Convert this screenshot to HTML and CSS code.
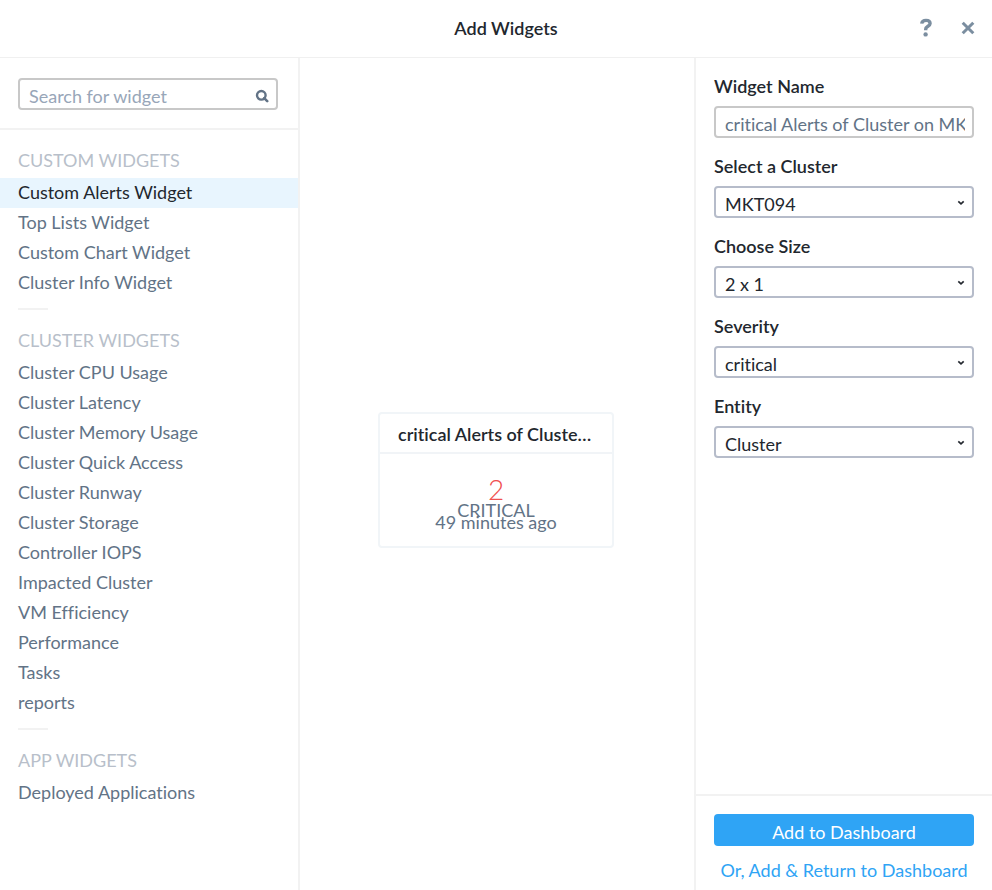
FILE: index.html
```html
<!DOCTYPE html>
<html lang="en">
<head>
<meta charset="utf-8">
<meta name="viewport" content="width=device-width, initial-scale=1">
<title>Add Widgets</title>
<link rel="stylesheet" href="styles.css">
</head>
<body>
<div class="dialog">
  <header class="dialog-header">
    <h1>Add Widgets</h1>
    <div class="header-actions">
      <button class="icon-button" type="button" aria-label="Help">
        <svg width="12" height="20" viewBox="0 0 12 20" fill="none" stroke="currentColor" stroke-width="3.4"><path d="M1.700 5.600C2 3.200 3.800 2.400 6 2.400c2.400 0 4.100 1.100 4.100 3.100 0 2.900-4.400 2.600-4.400 5.700v1"/><circle cx="5.600" cy="16.400" r="2.200" fill="currentColor" stroke="none"/></svg>
      </button>
      <button class="icon-button" type="button" aria-label="Close">
        <svg width="14" height="14" viewBox="0 0 14 14" fill="none" stroke="currentColor" stroke-width="3"><path d="M1.700 1.700l10.600 10.600M12.300 1.700L1.700 12.300"/></svg>
      </button>
    </div>
  </header>
  <div class="dialog-body">
    <nav class="sidebar" aria-label="Widgets">
      <div class="search">
        <div class="control">
          <input class="box" type="text" placeholder="Search for widget" aria-label="Search for widget">
          <svg class="search-icon" width="14" height="14" viewBox="0 0 14 14" fill="none" stroke="currentColor" stroke-width="2.400"><circle cx="6.300" cy="6.300" r="4.300"/><path d="M9.200 9.200l3 3" stroke-width="2.600" stroke-linecap="round"/></svg>
        </div>
      </div>
      <section class="group">
        <h2>CUSTOM WIDGETS</h2>
        <ul>
          <li><a class="active" href="#">Custom Alerts Widget</a></li>
          <li><a href="#">Top Lists Widget</a></li>
          <li><a href="#">Custom Chart Widget</a></li>
          <li><a href="#">Cluster Info Widget</a></li>
        </ul>
      </section>
      <section class="group">
        <h2>CLUSTER WIDGETS</h2>
        <ul>
          <li><a href="#">Cluster CPU Usage</a></li>
          <li><a href="#">Cluster Latency</a></li>
          <li><a href="#">Cluster Memory Usage</a></li>
          <li><a href="#">Cluster Quick Access</a></li>
          <li><a href="#">Cluster Runway</a></li>
          <li><a href="#">Cluster Storage</a></li>
          <li><a href="#">Controller IOPS</a></li>
          <li><a href="#">Impacted Cluster</a></li>
          <li><a href="#">VM Efficiency</a></li>
          <li><a href="#">Performance</a></li>
          <li><a href="#">Tasks</a></li>
          <li><a href="#">reports</a></li>
        </ul>
      </section>
      <section class="group">
        <h2>APP WIDGETS</h2>
        <ul>
          <li><a href="#">Deployed Applications</a></li>
        </ul>
      </section>
    </nav>
    <main class="preview">
      <article class="card">
        <h2>critical Alerts of Cluster on MKT094</h2>
        <div class="card-body">
          <strong>2</strong>
          <span>CRITICAL</span>
          <span>49 minutes ago</span>
        </div>
      </article>
    </main>
    <form class="settings">
      <div class="fields">
        <div class="field">
          <label for="name">Widget Name</label>
          <div class="control"><input class="box" id="name" type="text" value="critical Alerts of Cluster on MKT094"></div>
        </div>
        <div class="field">
          <label for="cluster">Select a Cluster</label>
          <div class="control">
            <select class="box" id="cluster"><option>MKT094</option></select>
            <svg class="chevron" width="8" height="6" viewBox="0 0 8 6"><path d="M1.300 1.300L4 3.900l2.700-2.600"/></svg>
          </div>
        </div>
        <div class="field">
          <label for="size">Choose Size</label>
          <div class="control">
            <select class="box" id="size"><option>2 x 1</option></select>
            <svg class="chevron" width="8" height="6" viewBox="0 0 8 6"><path d="M1.300 1.300L4 3.900l2.700-2.600"/></svg>
          </div>
        </div>
        <div class="field">
          <label for="severity">Severity</label>
          <div class="control">
            <select class="box" id="severity"><option>critical</option></select>
            <svg class="chevron" width="8" height="6" viewBox="0 0 8 6"><path d="M1.300 1.300L4 3.900l2.700-2.600"/></svg>
          </div>
        </div>
        <div class="field">
          <label for="entity">Entity</label>
          <div class="control">
            <select class="box" id="entity"><option>Cluster</option></select>
            <svg class="chevron" width="8" height="6" viewBox="0 0 8 6"><path d="M1.300 1.300L4 3.900l2.700-2.600"/></svg>
          </div>
        </div>
      </div>
      <div class="actions">
        <button class="primary" type="button">Add to Dashboard</button>
        <a href="#">Or, Add &amp; Return to Dashboard</a>
      </div>
    </form>
  </div>
</div>
</body>
</html>
```
FILE: styles.css
```css
* { box-sizing: border-box; }

body {
  margin: 0;
  background: #fff;
  color: #627386;
  font: 18px/20px Lato, "Open Sans", sans-serif;
  font-variant-ligatures: no-common-ligatures;
}

h1, h2, ul { margin: 0; padding: 0; font-size: inherit; }
ul { list-style: none; }
a { color: inherit; text-decoration: none; }
input, select, button { font: inherit; color: inherit; }

.dialog {
  display: flex;
  flex-direction: column;
  min-height: 100vh;
}

.dialog-header {
  display: grid;
  grid-template-columns: 1fr auto 1fr;
  align-items: center;
  height: 58px;
  padding: 0 16px 2px 36px;
  border-bottom: 1px solid #f0f0f0;
  color: #22272e;
}

.dialog-header h1 {
  grid-column: 2;
  font-weight: 600;
}

.header-actions {
  display: flex;
  justify-content: flex-end;
  gap: 26px;
}

.icon-button {
  display: flex;
  align-items: center;
  justify-content: center;
  min-width: 16px;
  padding: 0;
  border: 0;
  background: none;
  color: #7b8ea0;
}

.dialog-body {
  flex: 1;
  display: grid;
  grid-template-columns: 300px 1fr 298px;
}

.sidebar { border-right: 2px solid #f2f2f2; }

.search {
  padding: 20px 20px 18px 18px;
  border-bottom: 2px solid #f2f2f2;
}

.control { position: relative; }

.box {
  display: block;
  width: 100%;
  height: 32px;
  padding: 4px 7px 0 9px;
  border: 2px solid #c8c8c8;
  border-radius: 4px;
  background: #fff;
}

.box::placeholder { color: #98a6b8; opacity: 1; }

select.box {
  appearance: none;
  border-color: #b6bcca;
  color: #22272e;
}

.search-icon {
  position: absolute;
  top: 11px;
  right: 9px;
  color: #627386;
}

.chevron {
  position: absolute;
  top: 14px;
  right: 9px;
  fill: none;
  stroke: #22272e;
  stroke-width: 1.6;
  pointer-events: none;
}

.group h2 {
  padding: 20px 18px 8px;
  color: #b8bfca;
  font-weight: 400;
}

.group + .group::before {
  content: "";
  display: block;
  width: 30px;
  height: 2px;
  margin: 10px 0 0 18px;
  background: #f2f2f2;
}

.group a {
  display: block;
  padding: 4px 18px 6px;
}

.group .active {
  background: #e8f5fe;
  color: #22272e;
}

.preview {
  display: flex;
  align-items: center;
  justify-content: center;
  padding: 12px 2px 0 0;
}

.card {
  width: 236px;
  border: 2px solid #f1f5f8;
  border-radius: 4px;
  text-align: center;
}

.card h2 {
  padding: 10px 18px 8px;
  border-bottom: 2px solid #f1f4f7;
  color: #22272e;
  font-weight: 600;
  overflow: hidden;
  text-overflow: ellipsis;
  white-space: nowrap;
}

.card-body {
  display: flex;
  flex-direction: column;
  padding: 20px 0 18px;
  line-height: 12px;
}

.card-body strong {
  color: #f05050;
  font-size: 28px;
  font-weight: 300;
  line-height: 30px;
}

.settings {
  display: flex;
  flex-direction: column;
  border-left: 2px solid #f2f2f2;
}

.fields {
  flex: 1;
  display: flex;
  flex-direction: column;
  gap: 18px;
  padding: 18px;
}

.field {
  display: flex;
  flex-direction: column;
  gap: 10px;
}

.field label {
  color: #22272e;
  font-weight: 600;
}

.actions {
  display: flex;
  flex-direction: column;
  gap: 14px;
  padding: 18px 18px 10px;
  border-top: 2px solid #f2f2f2;
  color: #2fa4f5;
  text-align: center;
}

.primary {
  height: 32px;
  padding: 4px 0 0;
  border: 0;
  border-radius: 4px;
  background: #2fa4f5;
  color: #fff;
}
```
